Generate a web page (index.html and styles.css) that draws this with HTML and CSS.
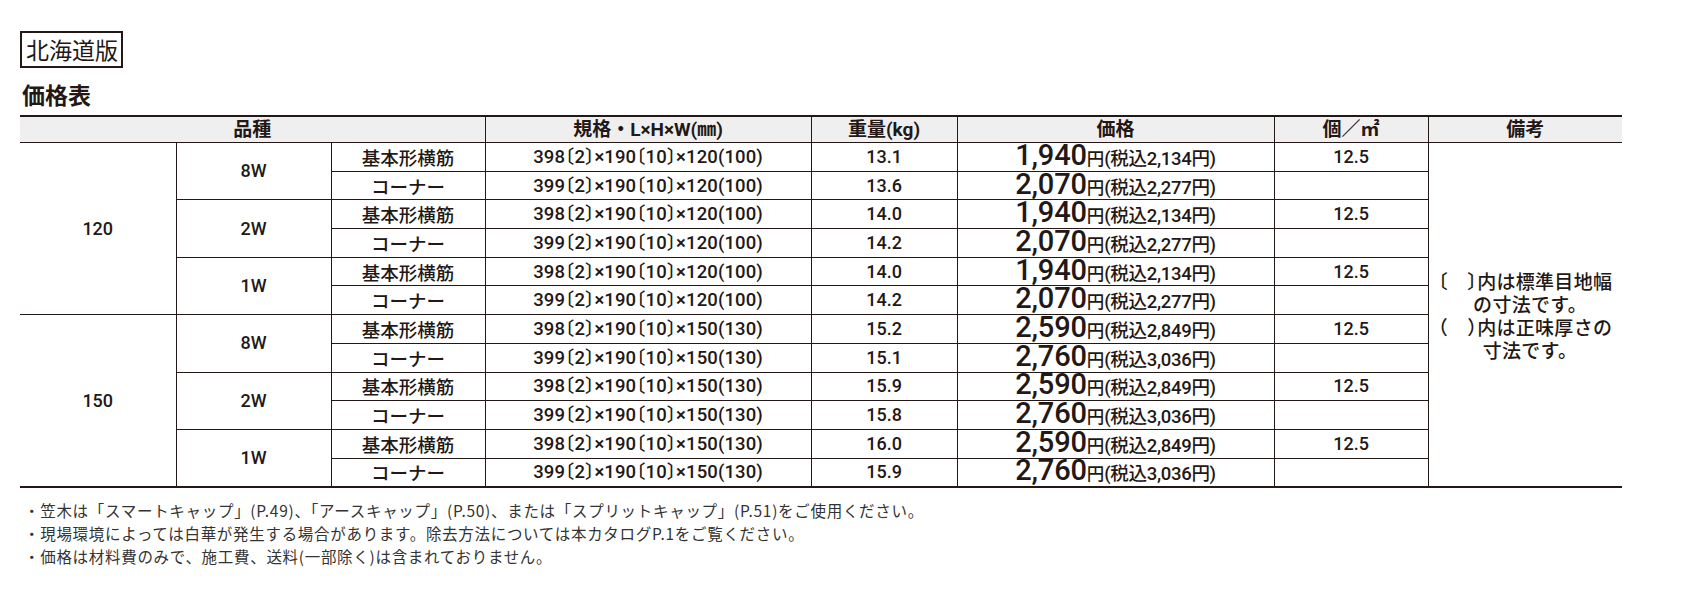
FILE: index.html
```html
<!DOCTYPE html>
<html lang="ja">
<head>
<meta charset="utf-8">
<title>価格表</title>
<link rel="stylesheet" href="styles.css">
</head>
<body>
<div class="page">
  <div class="edition">北海道版</div>
  <h2 class="title">価格表</h2>
  <table class="price-table">
    <colgroup>
      <col class="c1"><col class="c2"><col class="c3"><col class="c4"><col class="c5"><col class="c6"><col class="c7"><col class="c8">
    </colgroup>
    <thead>
      <tr>
        <th colspan="3" class="first">品種</th>
        <th>規格・L×H×W(㎜)</th>
        <th>重量(kg)</th>
        <th>価格</th>
        <th>個／㎡</th>
        <th>備考</th>
      </tr>
    </thead>
    <tbody>
      <tr>
        <td rowspan="6" class="first size">120</td>
        <td rowspan="2" class="grp">8W</td>
        <td class="jp">基本形横筋</td>
        <td class="spec">398〔2〕×190〔10〕×120(100)</td>
        <td class="num">13.1</td>
        <td class="price"><span class="big">1,940</span><span class="yen">円</span><span class="tax">(税込2,134円)</span></td>
        <td class="num">12.5</td>
        <td rowspan="12" class="note"><span class="note-line">〔　〕内は標準目地幅</span><span class="note-line">の寸法です。</span><span class="note-line">（　）内は正味厚さの</span><span class="note-line">寸法です。</span></td>
      </tr>
      <tr>
        <td class="jp">コーナー</td>
        <td class="spec">399〔2〕×190〔10〕×120(100)</td>
        <td class="num">13.6</td>
        <td class="price"><span class="big">2,070</span><span class="yen">円</span><span class="tax">(税込2,277円)</span></td>
        <td class="num"></td>
      </tr>
      <tr>
        <td rowspan="2" class="grp">2W</td>
        <td class="jp">基本形横筋</td>
        <td class="spec">398〔2〕×190〔10〕×120(100)</td>
        <td class="num">14.0</td>
        <td class="price"><span class="big">1,940</span><span class="yen">円</span><span class="tax">(税込2,134円)</span></td>
        <td class="num">12.5</td>
      </tr>
      <tr>
        <td class="jp">コーナー</td>
        <td class="spec">399〔2〕×190〔10〕×120(100)</td>
        <td class="num">14.2</td>
        <td class="price"><span class="big">2,070</span><span class="yen">円</span><span class="tax">(税込2,277円)</span></td>
        <td class="num"></td>
      </tr>
      <tr>
        <td rowspan="2" class="grp">1W</td>
        <td class="jp">基本形横筋</td>
        <td class="spec">398〔2〕×190〔10〕×120(100)</td>
        <td class="num">14.0</td>
        <td class="price"><span class="big">1,940</span><span class="yen">円</span><span class="tax">(税込2,134円)</span></td>
        <td class="num">12.5</td>
      </tr>
      <tr>
        <td class="jp">コーナー</td>
        <td class="spec">399〔2〕×190〔10〕×120(100)</td>
        <td class="num">14.2</td>
        <td class="price"><span class="big">2,070</span><span class="yen">円</span><span class="tax">(税込2,277円)</span></td>
        <td class="num"></td>
      </tr>
      <tr>
        <td rowspan="6" class="first size">150</td>
        <td rowspan="2" class="grp">8W</td>
        <td class="jp">基本形横筋</td>
        <td class="spec">398〔2〕×190〔10〕×150(130)</td>
        <td class="num">15.2</td>
        <td class="price"><span class="big">2,590</span><span class="yen">円</span><span class="tax">(税込2,849円)</span></td>
        <td class="num">12.5</td>
      </tr>
      <tr>
        <td class="jp">コーナー</td>
        <td class="spec">399〔2〕×190〔10〕×150(130)</td>
        <td class="num">15.1</td>
        <td class="price"><span class="big">2,760</span><span class="yen">円</span><span class="tax">(税込3,036円)</span></td>
        <td class="num"></td>
      </tr>
      <tr>
        <td rowspan="2" class="grp">2W</td>
        <td class="jp">基本形横筋</td>
        <td class="spec">398〔2〕×190〔10〕×150(130)</td>
        <td class="num">15.9</td>
        <td class="price"><span class="big">2,590</span><span class="yen">円</span><span class="tax">(税込2,849円)</span></td>
        <td class="num">12.5</td>
      </tr>
      <tr>
        <td class="jp">コーナー</td>
        <td class="spec">399〔2〕×190〔10〕×150(130)</td>
        <td class="num">15.8</td>
        <td class="price"><span class="big">2,760</span><span class="yen">円</span><span class="tax">(税込3,036円)</span></td>
        <td class="num"></td>
      </tr>
      <tr>
        <td rowspan="2" class="grp">1W</td>
        <td class="jp">基本形横筋</td>
        <td class="spec">398〔2〕×190〔10〕×150(130)</td>
        <td class="num">16.0</td>
        <td class="price"><span class="big">2,590</span><span class="yen">円</span><span class="tax">(税込2,849円)</span></td>
        <td class="num">12.5</td>
      </tr>
      <tr>
        <td class="jp">コーナー</td>
        <td class="spec">399〔2〕×190〔10〕×150(130)</td>
        <td class="num">15.9</td>
        <td class="price"><span class="big">2,760</span><span class="yen">円</span><span class="tax">(税込3,036円)</span></td>
        <td class="num"></td>
      </tr>
    </tbody>
  </table>
  <ul class="notes">
    <li>・笠木は「スマートキャップ」(P.49)、「アースキャップ」(P.50)、または「スプリットキャップ」(P.51)をご使用ください。</li>
    <li>・現場環境によっては白華が発生する場合があります。除去方法については本カタログP.1をご覧ください。</li>
    <li>・価格は材料費のみで、施工費、送料(一部除く)は含まれておりません。</li>
  </ul>
</div>
</body>
</html>
```

FILE: styles.css
```css
html, body {
  margin: 0;
  padding: 0;
  background: #ffffff;
}

body {
  color: #231815;
  font-family: "Roboto", "Noto Sans CJK JP", sans-serif;
}

.page {
  padding: 31px 0 0 20px;
}

.edition {
  display: inline-block;
  box-sizing: border-box;
  height: 37px;
  padding: 0 3px 0 4px;
  border: 2px solid #231815;
  font-family: "Noto Sans CJK JP", sans-serif;
  font-size: 23px;
  line-height: 32px;
  font-weight: 400;
}

.title {
  margin: 13px 0 0 2px;
  font-family: "Noto Sans CJK JP", sans-serif;
  font-size: 23px;
  line-height: 27px;
  font-weight: 700;
}

.price-table {
  margin-top: 7px;
  width: 1602px;
  table-layout: fixed;
  border-collapse: collapse;
  border-top: 2px solid #231815;
  border-bottom: 2px solid #231815;
}

.c1 { width: 156px; }
.c2 { width: 155px; }
.c3 { width: 154px; }
.c4 { width: 326px; }
.c5 { width: 146px; }
.c6 { width: 317px; }
.c7 { width: 154px; }
.c8 { width: 194px; }

.price-table th {
  height: 25px;
  padding: 0;
  background: #efefef;
  border-bottom: 1.5px solid #231815;
  border-left: 1px solid #231815;
  font-family: "Roboto", "Noto Sans CJK JP", sans-serif;
  font-size: 19px;
  line-height: 20px;
  font-weight: 700;
  text-align: center;
  vertical-align: middle;
}

.price-table td {
  height: 27.7px;
  padding: 0;
  border-bottom: 1px solid #231815;
  border-left: 1px solid #231815;
  font-size: 18px;
  line-height: 20px;
  font-weight: 500;
  text-align: center;
  vertical-align: middle;
  white-space: nowrap;
}

.price-table th.first,
.price-table td.first {
  border-left: none;
}

.price-table .jp {
  font-family: "Noto Sans CJK JP", sans-serif;
  font-size: 18.5px;
}

.price-table .spec {
  font-size: 18.5px;
  font-feature-settings: "halt";
  letter-spacing: 0.1px;
}

.price-table .num {
  font-size: 18px;
}

.price-table .price {
  line-height: 20px;
}

.big {
  display: inline-block;
  height: 20px;
  line-height: 20px;
  font-size: 29px;
  font-weight: 500;
  letter-spacing: -0.2px;
}

.yen {
  font-family: "Noto Sans CJK JP", sans-serif;
  font-size: 17.5px;
  font-weight: 500;
}

.tax {
  font-size: 18.5px;
  font-weight: 500;
  letter-spacing: -0.3px;
}

.price-table .note {
  font-family: "Noto Sans CJK JP", sans-serif;
  font-size: 19px;
  font-weight: 500;
  font-feature-settings: "halt";
  letter-spacing: 0.3px;
  white-space: nowrap;
}

.note-line {
  display: block;
  height: 23px;
  line-height: 23px;
}

.notes {
  list-style: none;
  margin: 11px 0 0 0;
  padding: 0 0 0 4px;
  font-family: "Noto Sans CJK JP", sans-serif;
  font-size: 15.5px;
  line-height: 23px;
  letter-spacing: 0.7px;
  font-weight: 400;
  color: #333333;
}

.notes li {
  margin: 0;
}
```
